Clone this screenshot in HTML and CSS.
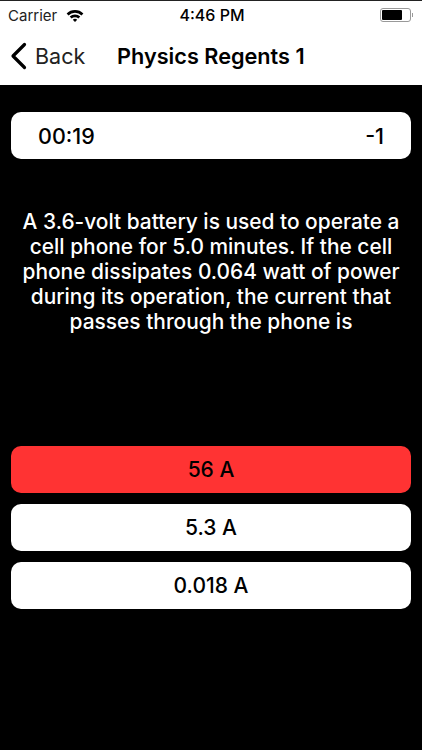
FILE: index.html
```html
<!DOCTYPE html>
<html>
<head>
    <meta charset="utf-8" />
    <title>Physics Regents 1</title>
    <meta name="viewport" content="width=device-width, initial-scale=1">
    <link rel="stylesheet" href="styles.css">
</head>
<body>
    <div id="header">
        <div id="status">
            <div class="status-left">
                <span class="carrier">Carrier</span>
                <svg class="wifi" width="18" height="13" viewBox="0 0 18 13">
                    <path d="M0.6 4.4A12 12 0 0 1 17.4 4.4L15.5 6.4A9.3 9.3 0 0 0 2.5 6.4Z" fill="#000"/>
                    <path d="M3.7 7.6A7.6 7.6 0 0 1 14.3 7.6L12.4 9.5A4.9 4.9 0 0 0 5.6 9.5Z" fill="#000"/>
                    <path d="M6.8 10.7A3.2 3.2 0 0 1 11.2 10.7L9 13Z" fill="#000"/>
                </svg>
            </div>
            <div class="clock">4:46 PM</div>
            <div class="status-right">
                <div class="battery"><div class="battery-level"></div></div>
                <div class="battery-cap"></div>
            </div>
        </div>
        <div id="nav">
            <div class="back">
                <svg class="chevron" width="18" height="28" viewBox="0 0 18 28">
                    <path d="M15.5 2.5L4 14L15.5 25.5" fill="none" stroke="#000" stroke-width="3.2" stroke-linecap="round" stroke-linejoin="round"/>
                </svg>
                <span class="back-label">Back</span>
            </div>
            <div class="title">Physics Regents 1</div>
        </div>
    </div>
    <div id="content">
        <div class="card timer">
            <span>00:19</span>
            <span>-1</span>
        </div>
        <p id="question">A 3.6-volt battery is used to operate a cell phone for 5.0 minutes. If the cell phone dissipates 0.064 watt of power during its operation, the current that passes through the phone is</p>
        <div id="answers">
            <div class="card answer wrong">56 A</div>
            <div class="card answer">5.3 A</div>
            <div class="card answer">0.018 A</div>
        </div>
    </div>
</body>
</html>
```

FILE: styles.css
```css
html, body{
    margin: 0;
    height: 100%;
}
body{
    font-family: Inter, "Open Sans", sans-serif;
    background-color: #000;
    color: #000;
}
#header{
    height: 85px;
    background-color: #fff;
    border-top: 1px solid #222;
    box-sizing: border-box;
}
#status{
    display: grid;
    grid-template-columns: 1fr auto 1fr;
    align-items: center;
    height: 28px;
    padding: 0 9px 0 8px;
}
.status-left{
    display: flex;
    align-items: center;
    gap: 9px;
}
.carrier{
    font-size: 15px;
    color: #222;
}
.clock{
    font-size: 16px;
    font-weight: 500;
    margin-left: 3px;
}
.status-right{
    display: flex;
    align-items: center;
    justify-content: flex-end;
    gap: 1px;
}
.battery{
    width: 31px;
    height: 14px;
    box-sizing: border-box;
    border: 1px solid #999;
    border-radius: 3px;
    padding: 1px;
}
.battery-level{
    width: 20px;
    height: 100%;
    background-color: #000;
    border-radius: 1px;
}
.battery-cap{
    width: 1px;
    height: 4px;
    background-color: #999;
}
#nav{
    display: flex;
    align-items: center;
    height: 54px;
    padding-left: 9px;
}
.back{
    display: flex;
    align-items: center;
    gap: 8px;
    width: 108px;
}
.back-label{
    font-size: 21.5px;
    color: #222;
}
.title{
    font-size: 21.7px;
    font-weight: 600;
}
#content{
    padding: 27px 11px 0;
}
.card{
    height: 47px;
    background-color: #fff;
    border-radius: 10px;
    font-size: 21px;
    font-weight: 500;
}
.timer{
    display: flex;
    align-items: center;
    justify-content: space-between;
    padding: 0 27px;
    font-size: 21.5px;
}
#question{
    margin: 50px 0 0;
    padding: 0 11px;
    height: 125px;
    color: #fff;
    font-size: 20.9px;
    font-weight: 500;
    line-height: 25px;
    text-align: center;
}
#answers{
    display: flex;
    flex-direction: column;
    gap: 11px;
    margin-top: 112px;
}
.answer{
    display: flex;
    align-items: center;
    justify-content: center;
}
.wrong{
    background-color: #ff3333;
}
```
